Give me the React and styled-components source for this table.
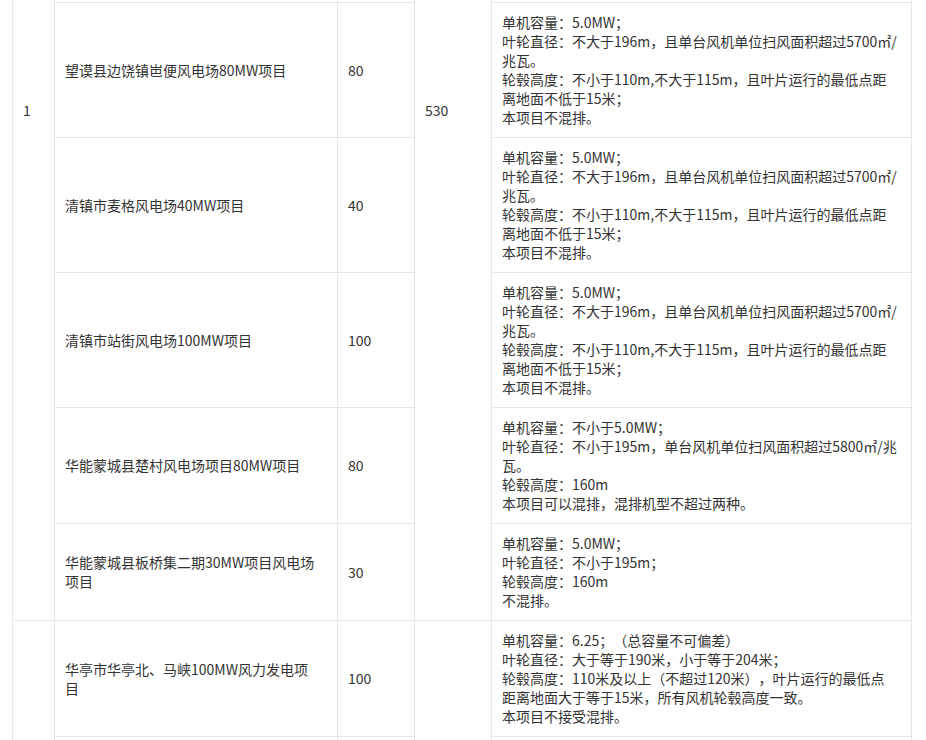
import React from "react";
import styled, { createGlobalStyle } from "styled-components";

const Global = createGlobalStyle`
  html, body { margin: 0; padding: 0; background: #fff; }
  body { font-family: "Microsoft YaHei", "Noto Sans CJK SC", "Noto Sans", sans-serif; }
`;

const Viewport = styled.div`
  height: 740px;
  overflow: hidden;
  padding-left: 12px;
`;

const Table = styled.table`
  width: 900px;
  margin-top: -440px;
  table-layout: fixed;
  border-collapse: collapse;
  font-size: 14px;
  line-height: 19px;
  color: #333;
  text-spacing-trim: space-all;
`;

const Row = styled.tr`
  height: ${(p) => (p.$h ? `${p.$h}px` : "auto")};
`;

const Cell = styled.td`
  border: 1px solid #e6e6e6;
  padding: 10px 10px;
  vertical-align: middle;
  text-align: left;
  word-break: break-all;
`;

const HeadCell = styled.th`
  border: 1px solid #e6e6e6;
  padding: 10px;
  font-weight: bold;
  text-align: left;
  white-space: nowrap;
  overflow: hidden;
`;

const Line = styled.span`
  display: block;
`;

const cols = [42, 283, 77, 77, 420];

const Lines = ({ items }) => items.map((t, i) => <Line key={i}>{t}</Line>);

const std5700 = [
  "单机容量：5.0MW；",
  "叶轮直径：不大于196m，且单台风机单位扫风面积超过5700㎡/",
  "兆瓦。",
  "轮毂高度：不小于110m,不大于115m，且叶片运行的最低点距",
  "离地面不低于15米；",
  "本项目不混排。",
];

const group1 = [
  { name: ["望谟县边饶镇岜便风电场80MW项目"], mw: "80", req: std5700 },
  { name: ["清镇市麦格风电场40MW项目"], mw: "40", req: std5700 },
  { name: ["清镇市站街风电场100MW项目"], mw: "100", req: std5700 },
  {
    name: ["华能蒙城县楚村风电场项目80MW项目"],
    mw: "80",
    req: [
      "单机容量：不小于5.0MW；",
      "叶轮直径：不小于195m，单台风机单位扫风面积超过5800㎡/兆",
      "瓦。",
      "轮毂高度：160m",
      "本项目可以混排，混排机型不超过两种。",
    ],
  },
  {
    name: ["华能蒙城县板桥集二期30MW项目风电场", "项目"],
    mw: "30",
    req: ["单机容量：5.0MW；", "叶轮直径：不小于195m；", "轮毂高度：160m", "不混排。"],
  },
];

const req625 = [
  "单机容量：6.25；（总容量不可偏差）",
  "叶轮直径：大于等于190米，小于等于204米；",
  "轮毂高度：110米及以上（不超过120米），叶片运行的最低点",
  "距离地面大于等于15米，所有风机轮毂高度一致。",
  "本项目不接受混排。",
];

const group2 = [
  { name: ["华亭市华亭北、马峡100MW风力发电项", "目"], mw: "100", req: req625 },
  { name: ["华亭市西华100MW风力发电项目"], mw: "100", req: req625 },
  { name: ["崇信县新窑50MW风力发电项目"], mw: "50", req: req625 },
  { name: ["灵台县百里50MW风力发电项目"], mw: "50", req: req625 },
];

export default function App() {
  return (
    <>
      <Global />
      <Viewport>
        <Table>
          <colgroup>
            {cols.map((w, i) => (
              <col key={i} style={{ width: w }} />
            ))}
          </colgroup>
          <tbody>
            <Row $h={40}>
              <HeadCell>序号</HeadCell>
              <HeadCell>项目名称</HeadCell>
              <HeadCell>容量</HeadCell>
              <HeadCell>合计</HeadCell>
              <HeadCell>风机技术要求</HeadCell>
            </Row>
            <Row $h={201}>
              <Cell rowSpan={7}>1</Cell>
              <Cell>黔西南州风电场100MW项目</Cell>
              <Cell>100</Cell>
              <Cell rowSpan={7}>530</Cell>
              <Cell>
                <Lines items={std5700} />
              </Cell>
            </Row>
            <Row $h={201}>
              <Cell>安顺市风电场100MW项目</Cell>
              <Cell>100</Cell>
              <Cell>
                <Lines items={std5700} />
              </Cell>
            </Row>
            {group1.map((r, i) => (
              <Row key={i}>
                <Cell>
                  <Lines items={r.name} />
                </Cell>
                <Cell>{r.mw}</Cell>
                <Cell>
                  <Lines items={r.req} />
                </Cell>
              </Row>
            ))}
            {group2.map((r, i) => (
              <Row key={i}>
                {i === 0 && <Cell rowSpan={group2.length}>2</Cell>}
                <Cell>
                  <Lines items={r.name} />
                </Cell>
                <Cell>{r.mw}</Cell>
                {i === 0 && <Cell rowSpan={group2.length}>300</Cell>}
                <Cell>
                  <Lines items={r.req} />
                </Cell>
              </Row>
            ))}
          </tbody>
        </Table>
      </Viewport>
    </>
  );
}
